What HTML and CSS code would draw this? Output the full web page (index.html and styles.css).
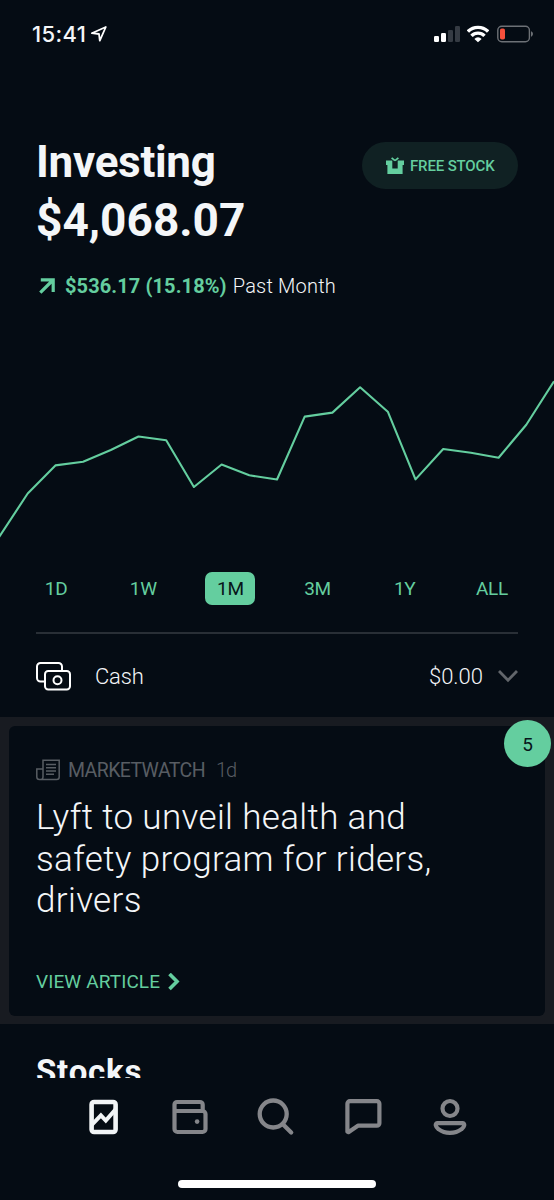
FILE: index.html
```html
<!DOCTYPE html>
<html lang="en">
<head>
<meta charset="utf-8">
<title>Investing</title>
<link rel="stylesheet" href="styles.css">
</head>
<body>
<div class="screen">
  <main class="content">
    <header class="status">
      <div class="clock"><span>15:41</span>
        <svg width="18" height="18" viewBox="0 0 18 18" fill="none" stroke="#fff" stroke-width="1.8" stroke-linejoin="round"><path d="M1.8 8.2 15.8 2 9.8 15.6 9 9Z"/></svg>
      </div>
      <div class="indicators">
        <svg width="26" height="18" viewBox="0 0 26 18"><g fill="#fff"><rect x="0" y="11" width="5" height="6" rx="1.2"/><rect x="7" y="8" width="5" height="9" rx="1.2"/></g><g fill="#353b43"><rect x="14" y="5" width="5" height="12" rx="1.2"/><rect x="21" y="1" width="5" height="16" rx="1.2"/></g></svg>
        <svg class="wifi" width="22" height="18" viewBox="0 0 22 18" fill="none" stroke="#fff" stroke-width="3.4"><path d="M.9 6.6A14.2 14.2 0 0 1 21.1 6.6M4.5 10.9A9 9 0 0 1 17.5 10.9"/><path d="M7.4 13.9a4.9 4.9 0 0 1 7.2 0L11 17.2Z" fill="#fff" stroke="none"/></svg>
        <svg width="37" height="18" viewBox="0 0 37 18"><rect x=".8" y="1.3" width="31.6" height="15.4" rx="4" fill="none" stroke="#6d7176" stroke-width="1.4"/><path d="M34 6.3c2.6.8 2.6 4.6 0 5.4Z" fill="#6d7176"/><rect x="3" y="3.5" width="5" height="11" rx="1.8" fill="#f8503c"/></svg>
      </div>
    </header>

    <section class="summary">
      <div class="heading">
        <h1 class="title">Investing</h1>
        <div class="balance">$4,068.07</div>
      </div>
      <button class="free-stock">
        <svg width="18" height="17" viewBox="0 0 18 17"><path fill="#64ce9f" d="M0 3.5h6.3V11.6h5.4V3.5H18V8h-1.4v9H1.4V8H0Z"/><path d="M9 3.6 5.6.9M9 3.6 12.4.9" stroke="#64ce9f" stroke-width="1.8" fill="none"/></svg>
        <span>FREE STOCK</span>
      </button>
    </section>

    <div class="change">
      <svg width="16" height="16" viewBox="0 0 16 16" fill="none" stroke="#64ce9f" stroke-width="3.2"><path d="M1.8 1.8H14.2V14M14 2 1.3 14.7"/></svg>
      <span class="gain">$536.17 (15.18%)</span><span class="period">Past Month</span>
    </div>

    <svg class="chart" width="554" height="190" viewBox="0 360 554 190"><polyline fill="none" stroke="#64ce9f" stroke-width="2.1" stroke-linejoin="round" points="-1,537.2 0,535.7 27.7,493.5 55.4,465.4 83.1,461.7 110.8,450 138.5,436.5 166.2,440.2 193.9,487 221.6,464.5 249.3,475.3 277,479.5 304.7,416.6 332.4,412.6 360.1,387.3 387.8,411.7 415.5,479.4 443.2,449 470.9,452.7 498.6,457.7 526.3,424.7 554,381.3"/></svg>

    <nav class="ranges">
      <span class="range">1D</span><span class="range">1W</span><span class="range active">1M</span><span class="range">3M</span><span class="range">1Y</span><span class="range">ALL</span>
    </nav>

    <div class="cash">
      <svg width="36" height="30" viewBox="0 0 36 30" fill="none" stroke="#fff" stroke-width="2"><path d="M8 19.5H4.5A3.5 3.5 0 0 1 1 16V4.5A3.5 3.5 0 0 1 4.5 1h18A3.5 3.5 0 0 1 26 4.5V8.5"/><rect x="9" y="9" width="25" height="18.5" rx="3.2"/><circle cx="21.5" cy="18.2" r="4"/></svg>
      <span class="cash-label">Cash</span>
      <span class="cash-value">$0.00</span>
      <svg width="20" height="14" viewBox="0 0 20 14" fill="none" stroke="#62666b" stroke-width="2.8"><path d="M1 1 10 10.2 19 1"/></svg>
    </div>

    <section class="feed">
      <article class="card">
        <div class="source">
          <svg width="24" height="22" viewBox="0 0 24 22" fill="none" stroke="#585d63" stroke-width="1.5"><path d="M7 18V1.2H23.2V18a2.5 2.5 0 0 1-2.5 2.5H3.4A2.6 2.6 0 0 1 .8 18V10H7M7 18a2.5 2.5 0 0 1-3 2.5"/><path d="M10 5.6h10M10 8.8h10M10 12h10M10 15.2h8"/></svg>
          <span class="publisher">MARKETWATCH</span><span class="age">1d</span>
        </div>
        <h2 class="headline">Lyft to unveil health and<br>safety program for riders,<br>drivers</h2>
        <a class="view"><span>VIEW ARTICLE</span><svg width="12" height="18" viewBox="0 0 12 18" fill="none" stroke="#64ce9f" stroke-width="3.6"><path d="M1.5 1 9 8.5 1.5 16"/></svg></a>
      </article>
      <span class="badge">5</span>
    </section>

    <h2 class="stocks">Stocks</h2>
  </main>

  <footer class="footer">
    <nav class="tabs">
      <svg width="40" height="40" viewBox="0 0 40 40" fill="none" stroke="#f1f4f6" stroke-width="4.6"><rect x="7.6" y="5" width="24" height="30" rx="2.5"/><path d="M8 27.7 16.9 18.4 21.8 23.6 31.6 12.4" stroke-width="4"/></svg>
      <svg width="40" height="40" viewBox="1.5 0 40 40" fill="none" stroke="#85868a" stroke-width="4.2"><path d="M5 8V32a3 3 0 0 0 3 3H33a3 3 0 0 0 3-3V17a3 3 0 0 0-3-3H7.5A2.5 2.5 0 0 1 5 11.5V7.5A2.5 2.5 0 0 1 7.5 5H30.5a2.7 2.7 0 0 1 2.7 2.7V14"/><circle cx="27.6" cy="24.6" r="2.3" fill="#85868a" stroke="none"/></svg>
      <svg width="40" height="40" viewBox="1.6 .3 40 40" fill="none" stroke="#85868a" stroke-width="4.3" stroke-linecap="round"><circle cx="17.8" cy="17.3" r="13.5"/><path d="M27.5 27.5 35.8 35.8"/></svg>
      <svg width="40" height="40" viewBox=".6 -.7 40 40" fill="none" stroke="#85868a" stroke-width="4.2" stroke-linejoin="round"><path d="M4 34V6a2.5 2.5 0 0 1 2.5-2.5H33.5A2.5 2.5 0 0 1 36 6V25.5A2.5 2.5 0 0 1 33.5 28H14.5L5 34.5Z"/></svg>
      <svg width="40" height="40" viewBox="0 0 40 40" fill="none" stroke="#85868a" stroke-width="4.2" stroke-linejoin="round"><circle cx="20" cy="11.5" r="7.5"/><path d="M7.7 26.2H32.3C35.5 26.2 34.5 30 31.5 32.2 25 37.2 15 37.2 8.5 32.2 5.5 30 4.5 26.2 7.7 26.2Z"/></svg>
    </nav>
    <div class="home-bar"></div>
  </footer>
</div>
</body>
</html>
```
FILE: styles.css
```css
* { box-sizing: border-box; }
body { margin: 0; background: #050c14; font-family: Roboto, "Liberation Sans", sans-serif; color: #f4f6f8; }
h1, h2 { margin: 0; }
svg { display: block; flex: none; }
.screen { width: 554px; height: 1200px; overflow: hidden; background: #050c14; white-space: nowrap; }
.content { height: 1078px; overflow: hidden; }
.status { height: 130px; padding: 25px 20px 0 32px; display: flex; justify-content: space-between; align-items: flex-start; }
.clock { display: flex; align-items: center; height: 18px; font: 500 22px/18px Inter, sans-serif; letter-spacing: .4px; gap: 4px; }
.indicators { display: flex; align-items: center; height: 18px; gap: 7px; }
.wifi { margin-right: 1px; }
.summary { height: 121px; padding: 0 36px; display: flex; justify-content: space-between; }
.heading { padding-top: 3px; }
.title { font-size: 44px; line-height: 58px; font-weight: 700; letter-spacing: -.3px; }
.balance { margin-top: -1px; font-size: 46px; line-height: 60px; font-weight: 700; }
.free-stock { width: 156px; height: 47px; margin-top: 12px; padding: 0 0 0 24px; border: 0; border-radius: 24px; background: #102123; color: #64ce9f; display: flex; align-items: center; gap: 6px; font: 500 15px/20px Roboto, sans-serif; letter-spacing: -.15px; }
.change { height: 109px; padding: 24px 36px 0 39px; display: flex; align-items: flex-start; font-size: 20px; line-height: 22px; }
.change svg { margin: 3px 10px 0 0; }
.gain { color: #64ce9f; font-weight: 700; letter-spacing: .1px; }
.period { margin-left: 6px; font-weight: 300; letter-spacing: .2px; }
.chart { width: 554px; height: 190px; }
.ranges { height: 82px; padding: 22px 18.5px 0 12.5px; display: grid; grid-template-columns: repeat(6, 1fr); justify-items: center; align-items: start; }
.range { width: 50px; height: 33px; border-radius: 7px; text-align: center; font-size: 19px; line-height: 34px; letter-spacing: -.3px; color: #64ce9f; }
.range.active { background: #64ce9f; color: #07151a; }
.cash { margin: 0 36px; height: 85px; padding-top: 2px; border-top: 2px solid #292f36; display: flex; align-items: center; font-size: 22px; font-weight: 300; }
.cash-label { margin-left: 23px; letter-spacing: -.2px; }
.cash-value { margin-left: auto; margin-right: 15px; }
.feed { position: relative; height: 307px; background: #181b21; padding: 9px 9px 8px; }
.card { height: 290px; border-radius: 6px; background: #050c14; padding: 33px 27px 0; }
.source { display: flex; align-items: center; height: 22px; color: #585d63; font-size: 20px; }
.publisher { margin-left: 8px; font-size: 19.5px; letter-spacing: -.6px; }
.age { margin-left: 11px; font-weight: 300; letter-spacing: -1px; }
.headline { margin-top: 16px; font-size: 35px; line-height: 41.5px; font-weight: 300; letter-spacing: .35px; }
.view { display: flex; align-items: center; gap: 8px; height: 22px; margin-top: 49px; color: #64ce9f; font-size: 19px; letter-spacing: .1px; }
.badge { position: absolute; top: 3px; right: 3px; width: 47px; height: 47px; border-radius: 50%; background: #64ce9f; color: #07151a; text-align: center; font-size: 19px; line-height: 50px; }
.stocks { padding: 26px 36px 0; font-size: 33px; line-height: 44px; font-weight: 700; letter-spacing: .8px; }
.footer { height: 122px; background: #050c14; }
.tabs { height: 102px; padding: 19px 84px 0; display: flex; justify-content: space-between; align-items: flex-start; }
.home-bar { width: 198px; height: 8px; margin: 0 auto; border-radius: 4px; background: #fff; }
```
